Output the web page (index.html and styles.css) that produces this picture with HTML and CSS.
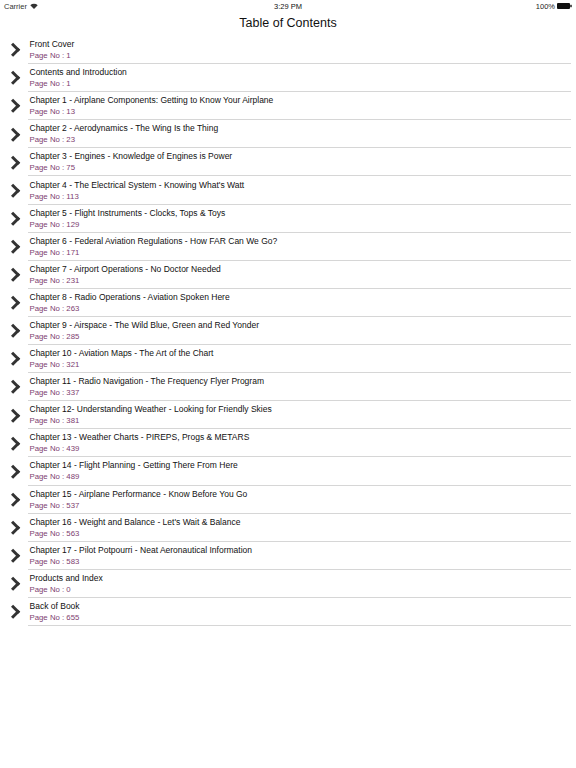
FILE: index.html
```html
<!DOCTYPE html>
<html>
<head>
<meta charset="utf-8">
<link rel="stylesheet" href="styles.css">
</head>
<body>
<div class="status">
  <div class="st-left">Carrier
    <svg class="wifi" width="8" height="6" viewBox="0 0 8 6"><path d="M4 6 L0.3 2.2 A5.5 5.5 0 0 1 7.7 2.2 Z" fill="#333"/></svg>
  </div>
  <div class="st-mid">3:29 PM</div>
  <div class="st-right">100%
    <svg class="batt" width="15" height="6" viewBox="0 0 15 6"><rect x="0" y="0" width="13" height="6" rx="1" fill="#111"/><rect x="13.3" y="1.8" width="1.4" height="2.4" fill="#111"/></svg>
  </div>
</div>
<div class="navbar">Table of Contents</div>
<ul class="list">
  <li class="row"><span class="chev"></span><div class="txt"><div class="t">Front Cover</div><div class="p">Page No : 1</div></div></li>
  <li class="row"><span class="chev"></span><div class="txt"><div class="t">Contents and Introduction</div><div class="p">Page No : 1</div></div></li>
  <li class="row"><span class="chev"></span><div class="txt"><div class="t">Chapter 1 - Airplane Components: Getting to Know Your Airplane</div><div class="p">Page No : 13</div></div></li>
  <li class="row"><span class="chev"></span><div class="txt"><div class="t">Chapter 2 - Aerodynamics - The Wing Is the Thing</div><div class="p">Page No : 23</div></div></li>
  <li class="row"><span class="chev"></span><div class="txt"><div class="t">Chapter 3 - Engines - Knowledge of Engines is Power</div><div class="p">Page No : 75</div></div></li>
  <li class="row"><span class="chev"></span><div class="txt"><div class="t">Chapter 4 - The Electrical System - Knowing What's Watt</div><div class="p">Page No : 113</div></div></li>
  <li class="row"><span class="chev"></span><div class="txt"><div class="t">Chapter 5 - Flight Instruments - Clocks, Tops &amp; Toys</div><div class="p">Page No : 129</div></div></li>
  <li class="row"><span class="chev"></span><div class="txt"><div class="t">Chapter 6 - Federal Aviation Regulations - How FAR Can We Go?</div><div class="p">Page No : 171</div></div></li>
  <li class="row"><span class="chev"></span><div class="txt"><div class="t">Chapter 7 - Airport Operations - No Doctor Needed</div><div class="p">Page No : 231</div></div></li>
  <li class="row"><span class="chev"></span><div class="txt"><div class="t">Chapter 8 - Radio Operations - Aviation Spoken Here</div><div class="p">Page No : 263</div></div></li>
  <li class="row"><span class="chev"></span><div class="txt"><div class="t">Chapter 9 - Airspace - The Wild Blue, Green and Red Yonder</div><div class="p">Page No : 285</div></div></li>
  <li class="row"><span class="chev"></span><div class="txt"><div class="t">Chapter 10 - Aviation Maps - The Art of the Chart</div><div class="p">Page No : 321</div></div></li>
  <li class="row"><span class="chev"></span><div class="txt"><div class="t">Chapter 11 - Radio Navigation - The Frequency Flyer Program</div><div class="p">Page No : 337</div></div></li>
  <li class="row"><span class="chev"></span><div class="txt"><div class="t">Chapter 12- Understanding Weather - Looking for Friendly Skies</div><div class="p">Page No : 381</div></div></li>
  <li class="row"><span class="chev"></span><div class="txt"><div class="t">Chapter 13 - Weather Charts - PIREPS, Progs &amp; METARS</div><div class="p">Page No : 439</div></div></li>
  <li class="row"><span class="chev"></span><div class="txt"><div class="t">Chapter 14 - Flight Planning - Getting There From Here</div><div class="p">Page No : 489</div></div></li>
  <li class="row"><span class="chev"></span><div class="txt"><div class="t">Chapter 15 - Airplane Performance - Know Before You Go</div><div class="p">Page No : 537</div></div></li>
  <li class="row"><span class="chev"></span><div class="txt"><div class="t">Chapter 16 - Weight and Balance - Let's Wait &amp; Balance</div><div class="p">Page No : 563</div></div></li>
  <li class="row"><span class="chev"></span><div class="txt"><div class="t">Chapter 17 - Pilot Potpourri - Neat Aeronautical Information</div><div class="p">Page No : 583</div></div></li>
  <li class="row"><span class="chev"></span><div class="txt"><div class="t">Products and Index</div><div class="p">Page No : 0</div></div></li>
  <li class="row"><span class="chev"></span><div class="txt"><div class="t">Back of Book</div><div class="p">Page No : 655</div></div></li>
</ul>
</body>
</html>
```
FILE: styles.css
```css
html, body {
  margin: 0;
  padding: 0;
  background: #fff;
  font-family: "Liberation Sans", Arial, sans-serif;
  color: #111;
}
.status {
  height: 12px;
  display: flex;
  align-items: center;
  justify-content: space-between;
  padding: 0 4px;
  font-size: 7.5px;
  color: #333;
  position: relative;
}
.st-left { display: flex; align-items: center; gap: 3px; }
.st-mid {
  position: absolute;
  left: 0; right: 0;
  text-align: center;
  color: #111;
}
.st-right { display: flex; align-items: center; gap: 2px; color: #222; }
.navbar {
  height: 22px;
  display: flex;
  align-items: center;
  justify-content: center;
  font-size: 12.5px;
  color: #111;
}
.list {
  list-style: none;
  margin: 2px 0 0 0;
  padding: 0;
}
.row {
  display: flex;
  align-items: center;
  height: 28.1px;
  box-sizing: border-box;
  padding-left: 8px;
}
.chev {
  width: 6.5px;
  height: 6.5px;
  border-right: 3.5px solid #333;
  border-bottom: 3.5px solid #333;
  transform: rotate(-45deg);
  margin-right: 10px;
  flex: none;
}
.txt {
  flex: 1;
  height: 100%;
  display: flex;
  flex-direction: column;
  justify-content: center;
  border-bottom: 1px solid #d6d6d6;
  margin-right: 5px;
  box-sizing: border-box;
  padding-top: 1px;
  padding-left: 2px;
}
.t {
  font-size: 8.5px;
  color: #111;
  line-height: 11px;
}
.p {
  font-size: 7.8px;
  color: #7e4070;
  line-height: 11px;
}
```
